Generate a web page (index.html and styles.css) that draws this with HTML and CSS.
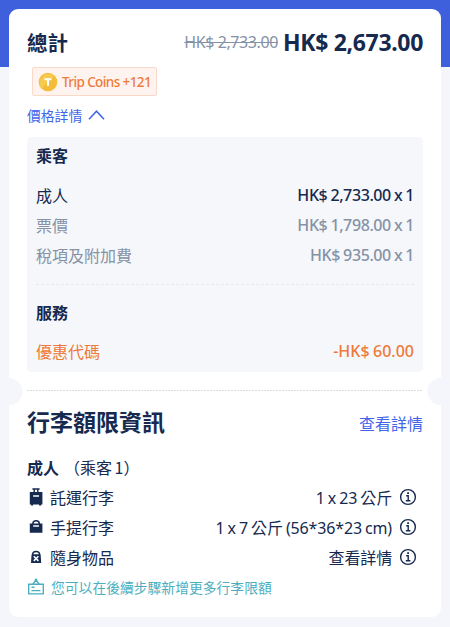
FILE: index.html
```html
<!DOCTYPE html>
<html lang="zh-Hant">
<head>
  <meta charset="UTF-8">
  <title>總計</title>
  <link rel="stylesheet" href="styles.css">
</head>
<body>
  <div class="card">
    <section class="summary">
      <div class="total">
        <h1>總計</h1>
        <div class="price">
          <del>HK$ 2,733.00</del>
          <strong>HK$ 2,673.00</strong>
        </div>
      </div>
      <div class="coins">
        <svg width="20" height="20" viewBox="0 0 20 20">
          <circle cx="10" cy="10" r="9.3" fill="#f3bc3a"/>
          <path d="M3.5 16.5A9.3 9.3 0 0 1 16.5 3.5Z" fill="#f6c94f"/>
          <path d="M6.5 7.2h7M10 7.2v6.6" stroke="#fff" stroke-width="2" fill="none"/>
        </svg>
        <span>Trip Coins +121</span>
      </div>
    </section>

    <section class="details">
      <div class="toggle">
        <span>價格詳情</span>
        <svg width="17" height="12" viewBox="0 0 17 12">
          <path d="M1 10.2 8.5 2.2 16 10.2" fill="none" stroke="#4265ea" stroke-width="1.5"/>
        </svg>
      </div>
      <div class="breakdown">
        <h3>乘客</h3>
        <div class="row adult"><span>成人</span><span class="num">HK$ 2,733.00 x 1</span></div>
        <div class="row muted"><span>票價</span><span class="num">HK$ 1,798.00 x 1</span></div>
        <div class="row muted"><span>稅項及附加費</span><span class="num">HK$ 935.00 x 1</span></div>
        <h3 class="service">服務</h3>
        <div class="row promo"><span>優惠代碼</span><span class="num">-HK$ 60.00</span></div>
      </div>
    </section>

    <div class="divider"></div>

    <section class="baggage">
      <div class="baggage-head">
        <h2>行李額限資訊</h2>
        <a>查看詳情</a>
      </div>
      <div class="passenger"><b>成人</b><span>（乘客 1）</span></div>

      <div class="item">
        <svg class="icon" width="18" height="18" viewBox="0 0 18 18">
          <path d="M5.4 1h7.2M7.2 1v4M10.8 1v4" fill="none" stroke="#16294f" stroke-width="1.4"/>
          <path fill="#16294f" fill-rule="evenodd" d="M2.8 4h12.6v12.4h-1.3v1h-2v-1H6.1v1h-2v-1H2.8ZM6.2 7.2v1.5h5.8V7.2Z"/>
        </svg>
        <span class="label">託運行李</span>
        <span class="value">1 x 23 公斤</span>
        <svg class="info" width="18" height="18" viewBox="0 0 18 18"><use href="#info"/></svg>
      </div>
      <div class="item">
        <svg class="icon" width="18" height="18" viewBox="0 0 18 18">
          <path d="M5.9 6V5.6a3.2 2.8 0 0 1 6.4 0V6" fill="none" stroke="#16294f" stroke-width="1.5"/>
          <path fill="#16294f" fill-rule="evenodd" d="M2.8 5.4h12.6v9.4H2.8ZM6.2 7.2v1.5h5.8V7.2Z"/>
        </svg>
        <span class="label">手提行李</span>
        <span class="value">1 x 7 公斤 (56*36*23 cm)</span>
        <svg class="info" width="18" height="18" viewBox="0 0 18 18"><use href="#info"/></svg>
      </div>
      <div class="item">
        <svg class="icon" width="18" height="18" viewBox="0 0 18 18">
          <path d="M5.7 7V6.4a3.4 3 0 0 1 6.8 0V7" fill="none" stroke="#16294f" stroke-width="1.5"/>
          <path d="M4.6 6.3h9l.6 8.7H4Z" fill="#16294f"/>
          <path d="M6.8 8.3l4.6 4.6M11.4 8.3l-4.6 4.6" stroke="#fff" stroke-width="1.6"/>
        </svg>
        <span class="label">隨身物品</span>
        <span class="value">查看詳情</span>
        <svg class="info" width="18" height="18" viewBox="0 0 18 18">
          <g id="info" fill="none" stroke="#16294f">
            <circle cx="9" cy="9" r="7.4" stroke-width="1.4"/>
            <path d="M7.2 7.8h2v5M6.8 12.8h4.6" stroke-width="1.4"/>
            <path d="M8.2 5.2h1.8" stroke-width="1.8"/>
          </g>
        </svg>
      </div>

      <div class="note">
        <svg width="18" height="18" viewBox="0 0 18 18" fill="none" stroke="#4bafbf" stroke-width="1.4">
          <path d="M1.7 6.2h14.6v9.7H1.7ZM5.8 6 9 2.4 12.2 6M4.5 9.3h3M4.5 12.6h9"/>
          <circle cx="9" cy="2.1" r=".8"/>
        </svg>
        <span>您可以在後續步驟新增更多行李限額</span>
      </div>
    </section>
  </div>
</body>
</html>
```
FILE: styles.css
```css
* {
  box-sizing: border-box;
}
body {
  margin: 0;
  height: 627px;
  padding: 9px 9px 10px;
  background: linear-gradient(#3e60dc 67px, #f5f6fb 67px);
  color: #16294f;
  font-family: "Noto Sans", "Noto Sans CJK TC", sans-serif;
  font-size: 16px;
  white-space: nowrap;
}
h1, h2, h3 {
  margin: 0;
}
svg {
  flex: none;
}
.card {
  height: 608px;
  background: #fff;
  border-radius: 9px;
}

/* 總計 */
.summary {
  height: 95px;
  padding: 15px 18px 0;
}
.total {
  display: flex;
  justify-content: space-between;
  align-items: center;
  height: 35px;
}
.total h1 {
  font-size: 20.5px;
  font-family: "Noto Sans CJK TC", sans-serif;
}
.price {
  display: flex;
  align-items: center;
  gap: 5px;
}
.price del {
  color: #8592a6;
  letter-spacing: -0.4px;
}
.price strong {
  font-size: 23px;
  letter-spacing: -0.33px;
}
.coins {
  display: flex;
  align-items: center;
  gap: 4px;
  width: 125px;
  height: 29px;
  margin: 8px 0 0 5px;
  padding-left: 5px;
  border: 1px solid #fbd9c8;
  border-radius: 2px;
  background: #fef3ee;
  color: #ee7a3a;
  font-size: 13.5px;
  font-weight: 500;
  letter-spacing: -0.6px;
}

/* 價格詳情 */
.details {
  padding: 0 18px;
}
.toggle {
  display: flex;
  align-items: center;
  gap: 6px;
  height: 22px;
  margin-bottom: 11px;
  color: #4265ea;
  font-size: 13.8px;
}
.breakdown {
  height: 235px;
  padding: 4px 9px 0;
  border-radius: 4px;
  background: #f5f7fb;
}
.breakdown h3 {
  height: 30px;
  font-size: 16px;
  line-height: 30px;
}
.row {
  display: flex;
  justify-content: space-between;
  align-items: center;
  height: 30px;
}
.num {
  font-weight: 500;
  letter-spacing: -0.4px;
  word-spacing: -0.7px;
}
.adult {
  margin-top: 9px;
}
.muted {
  color: #8592a6;
}
.breakdown .service {
  height: 44px;
  margin-top: 14px;
  padding-top: 13px;
  border-top: 1px dashed #e6e9ef;
}
.promo {
  margin-top: 8px;
  color: #ee7a3a;
}
.promo .num {
  letter-spacing: 0;
}

/* 票券撕線 */
.divider {
  height: 27px;
  margin-top: 6px;
  background:
    radial-gradient(circle at 0 50%, #f5f6fb 13px, transparent 14px),
    radial-gradient(circle at 100% 50%, #f5f6fb 13px, transparent 14px),
    repeating-linear-gradient(90deg, #d8dbe0 0 2px, transparent 2px 3px) center 12px / 396px 1px no-repeat;
}

/* 行李 */
.baggage {
  padding: 0 18px;
}
.baggage-head {
  display: flex;
  justify-content: space-between;
  align-items: center;
  height: 36px;
}
.baggage-head h2 {
  font-size: 23px;
  line-height: 34px;
  margin-bottom: 2px;
}
.baggage-head a {
  color: #4265ea;
}
.passenger {
  display: flex;
  align-items: center;
  gap: 5px;
  height: 30px;
  margin-top: 11px;
  font-family: "Noto Sans CJK TC", sans-serif;
}
.passenger span {
  word-spacing: -1px;
}
.item {
  display: flex;
  align-items: center;
  height: 30px;
}
.label {
  margin-left: 5px;
}
.value {
  margin-left: auto;
  margin-right: 7px;
  letter-spacing: -0.15px;
  word-spacing: -0.9px;
}
.info {
  margin-right: 6px;
}
.note {
  display: flex;
  align-items: center;
  gap: 6px;
  height: 30px;
  color: #4bafbf;
  font-size: 13.8px;
}
```
